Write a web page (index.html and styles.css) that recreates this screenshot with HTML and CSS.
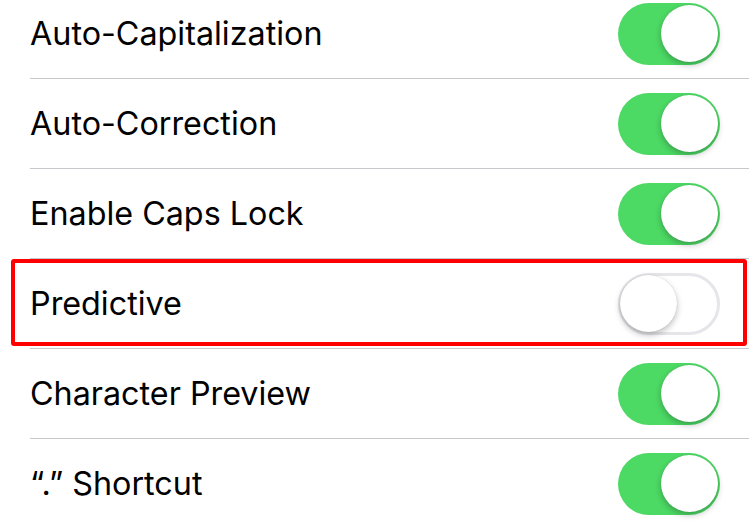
FILE: index.html
```html
<!DOCTYPE html>
<html>
<head>
<meta charset="utf-8">
<link rel="stylesheet" href="styles.css">
</head>
<body>
<div class="list">
  <div class="row"><span class="label">Auto-Capitalization</span><span class="toggle on"><span class="knob"></span></span></div>
  <div class="row"><span class="label">Auto-Correction</span><span class="toggle on"><span class="knob"></span></span></div>
  <div class="row"><span class="label">Enable Caps Lock</span><span class="toggle on"><span class="knob"></span></span></div>
  <div class="row highlighted"><span class="label">Predictive</span><span class="toggle off"><span class="knob"></span></span><span class="mark"></span></div>
  <div class="row"><span class="label">Character Preview</span><span class="toggle on"><span class="knob"></span></span></div>
  <div class="row"><span class="label">“.” Shortcut</span><span class="toggle on"><span class="knob"></span></span></div>
</div>
</body>
</html>
```
FILE: styles.css
```css
html, body {
  margin: 0;
  padding: 0;
  background: #ffffff;
  overflow: hidden;
}
.list {
  margin-top: -11px;
  font-family: Inter, "Liberation Sans", sans-serif;
}
.row {
  position: relative;
  height: 89px;
  margin-left: 30px;
  padding-right: 29px;
  border-bottom: 1px solid #c8c7cc;
  display: flex;
  align-items: center;
  justify-content: space-between;
}
.label {
  font-size: 32.3px;
  color: #000;
  letter-spacing: 0;
}
.toggle {
  position: relative;
  width: 102px;
  height: 62px;
  border-radius: 31px;
  box-sizing: border-box;
  display: flex;
  align-items: center;
}
.toggle.on {
  background: #4cd964;
  justify-content: flex-end;
  padding-right: 2px;
}
.toggle.off {
  background: #fff;
  border: 3px solid #e5e5ea;
  justify-content: flex-start;
}
.knob {
  width: 57px;
  height: 57px;
  border-radius: 50%;
  background: #fff;
  box-shadow: 0 3px 6px rgba(0,0,0,0.25), 0 0 1px rgba(0,0,0,0.2);
}
.toggle.off .knob {
  margin-left: -1px;
}
.mark {
  position: absolute;
  left: -19px;
  right: 2px;
  top: 0;
  height: 87px;
  border: 4px solid #ff0000;
  border-radius: 3px;
  box-sizing: border-box;
  pointer-events: none;
}
```
